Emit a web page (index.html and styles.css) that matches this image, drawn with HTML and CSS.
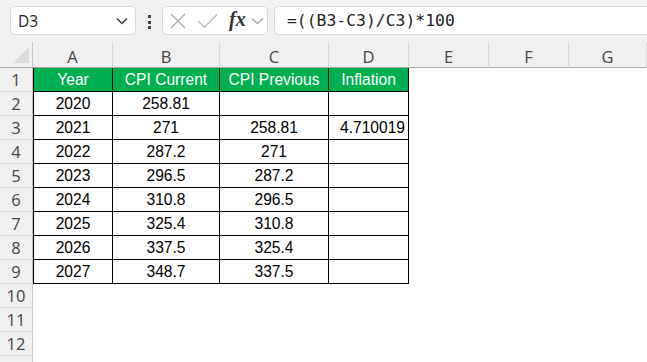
FILE: index.html
```html
<!DOCTYPE html>
<html lang="en">
<head>
    <meta charset="UTF-8">
    <title>Inflation</title>
    <link rel="stylesheet" href="styles.css">
</head>
<body>

<div class="toolbar">
    <div class="namebox">
        <span>D3</span>
        <svg class="chev" width="12" height="8" viewBox="0 0 12 8"><path d="M1 1.5 L6 6.5 L11 1.5" fill="none" stroke="#333" stroke-width="1.3"/></svg>
    </div>
    <div class="dots"><i></i><i></i><i></i></div>
    <div class="fnbox">
        <svg width="16" height="16" viewBox="0 0 16 16"><path d="M1 1 L15 15 M15 1 L1 15" stroke="#a8a8a8" stroke-width="1.2"/></svg>
        <svg width="21" height="16" viewBox="0 0 21 16"><path d="M1 8 L7.5 14.5 L20 1.5" fill="none" stroke="#b4b4b4" stroke-width="1.2"/></svg>
        <span class="fx">fx</span>
        <svg width="13" height="8" viewBox="0 0 13 8"><path d="M1 1.5 L6.5 6.5 L12 1.5" fill="none" stroke="#999" stroke-width="1.1"/></svg>
    </div>
    <div class="formula">=((B3-C3)/C3)*100</div>
</div>

<div class="sheet">
    <div class="corner"><div class="tri"></div></div>
    <div class="colhead">A</div>
    <div class="colhead">B</div>
    <div class="colhead">C</div>
    <div class="colhead">D</div>
    <div class="colhead">E</div>
    <div class="colhead">F</div>
    <div class="colhead">G</div>

    <div class="rowhead">1</div>
    <div class="cell t first head">Year</div>
    <div class="cell t head">CPI Current</div>
    <div class="cell t head">CPI Previous</div>
    <div class="cell t head">Inflation</div>
    <div class="cell"></div><div class="cell"></div><div class="cell"></div>

    <div class="rowhead">2</div>
    <div class="cell t first">2020</div>
    <div class="cell t">258.81</div>
    <div class="cell t"></div>
    <div class="cell t"></div>
    <div class="cell"></div><div class="cell"></div><div class="cell"></div>

    <div class="rowhead">3</div>
    <div class="cell t first">2021</div>
    <div class="cell t">271</div>
    <div class="cell t">258.81</div>
    <div class="cell t num">4.710019</div>
    <div class="cell"></div><div class="cell"></div><div class="cell"></div>

    <div class="rowhead">4</div>
    <div class="cell t first">2022</div>
    <div class="cell t">287.2</div>
    <div class="cell t">271</div>
    <div class="cell t"></div>
    <div class="cell"></div><div class="cell"></div><div class="cell"></div>

    <div class="rowhead">5</div>
    <div class="cell t first">2023</div>
    <div class="cell t">296.5</div>
    <div class="cell t">287.2</div>
    <div class="cell t"></div>
    <div class="cell"></div><div class="cell"></div><div class="cell"></div>

    <div class="rowhead">6</div>
    <div class="cell t first">2024</div>
    <div class="cell t">310.8</div>
    <div class="cell t">296.5</div>
    <div class="cell t"></div>
    <div class="cell"></div><div class="cell"></div><div class="cell"></div>

    <div class="rowhead">7</div>
    <div class="cell t first">2025</div>
    <div class="cell t">325.4</div>
    <div class="cell t">310.8</div>
    <div class="cell t"></div>
    <div class="cell"></div><div class="cell"></div><div class="cell"></div>

    <div class="rowhead">8</div>
    <div class="cell t first">2026</div>
    <div class="cell t">337.5</div>
    <div class="cell t">325.4</div>
    <div class="cell t"></div>
    <div class="cell"></div><div class="cell"></div><div class="cell"></div>

    <div class="rowhead">9</div>
    <div class="cell t first">2027</div>
    <div class="cell t">348.7</div>
    <div class="cell t">337.5</div>
    <div class="cell t"></div>
    <div class="cell"></div><div class="cell"></div><div class="cell"></div>

    <div class="rowhead">10</div>
    <div class="cell"></div><div class="cell"></div><div class="cell"></div><div class="cell"></div>
    <div class="cell"></div><div class="cell"></div><div class="cell"></div>

    <div class="rowhead">11</div>
    <div class="cell"></div><div class="cell"></div><div class="cell"></div><div class="cell"></div>
    <div class="cell"></div><div class="cell"></div><div class="cell"></div>

    <div class="rowhead">12</div>
    <div class="cell"></div><div class="cell"></div><div class="cell"></div><div class="cell"></div>
    <div class="cell"></div><div class="cell"></div><div class="cell"></div>

    <div class="rowhead"></div>
    <div class="cell"></div><div class="cell"></div><div class="cell"></div><div class="cell"></div>
    <div class="cell"></div><div class="cell"></div><div class="cell"></div>
</div>

</body>
</html>
```

FILE: styles.css
```css
body {
    margin: 0;
    background-color: #f0f0f0;
    font-family: "Liberation Sans", Arial, sans-serif;
    overflow: hidden;
    width: 647px;
    height: 362px;
}
.toolbar {
    display: flex;
    align-items: flex-start;
    height: 42px;
    padding-top: 6px;
    padding-left: 10px;
    box-sizing: border-box;
}
.namebox {
    display: flex;
    align-items: center;
    justify-content: space-between;
    width: 126px;
    height: 29px;
    box-sizing: border-box;
    background-color: white;
    border: 1px solid #d6d6d6;
    border-radius: 5px;
    padding: 0 7px 0 7px;
    font-family: "Open Sans", sans-serif;
    font-size: 15.5px;
    color: #222;
}
.dots {
    display: flex;
    flex-direction: column;
    gap: 2.5px;
    width: 26px;
    align-items: center;
    padding-top: 9px;
}
.dots i {
    display: block;
    width: 3px;
    height: 3px;
    background-color: #444;
}
.fnbox {
    display: flex;
    align-items: center;
    width: 106px;
    height: 29px;
    box-sizing: border-box;
    background-color: white;
    border: 1px solid #d6d6d6;
    border-radius: 5px;
    padding-left: 7px;
}
.fnbox svg:nth-child(1) {
    margin-right: 11px;
}
.fnbox svg:nth-child(2) {
    margin-right: 11px;
}
.fx {
    font-family: "Liberation Serif", serif;
    font-style: italic;
    font-weight: bold;
    font-size: 20px;
    color: #333;
    margin-right: 5px;
    margin-top: -3px;
}
.formula {
    flex: 1;
    height: 29px;
    box-sizing: border-box;
    margin-left: 6px;
    background-color: white;
    border: 1px solid #d6d6d6;
    border-right: none;
    border-radius: 5px 0 0 5px;
    padding-left: 12px;
    font-family: "DejaVu Sans Mono", monospace;
    font-size: 16.4px;
    line-height: 27px;
    color: #222;
    white-space: nowrap;
}
.sheet {
    display: grid;
    grid-template-columns: 33px 80px 107px 109px 80px 80px 80px 78px;
    grid-template-rows: 26px repeat(13, 24px);
    width: 647px;
    overflow: hidden;
    background-color: white;
}
.corner {
    background-color: #f0f0f0;
    border-right: 1px solid #c6c6c6;
    border-bottom: 1px solid #ababab;
    box-sizing: border-box;
    display: flex;
    align-items: flex-end;
    justify-content: flex-end;
    padding: 0 3px 4px 0;
}
.tri {
    width: 0;
    height: 0;
    border-left: 16px solid transparent;
    border-bottom: 16px solid #dcdcdc;
}
.colhead {
    background-color: #f0f0f0;
    border-right: 1px solid #d8d8d8;
    border-bottom: 1px solid #ababab;
    box-sizing: border-box;
    display: flex;
    align-items: center;
    justify-content: center;
    padding-top: 3px;
    font-family: "Open Sans", sans-serif;
    font-size: 16.5px;
    color: #444;
}
.rowhead {
    background-color: #f0f0f0;
    border-right: 1px solid #c6c6c6;
    border-bottom: 1px solid #dcdcdc;
    box-sizing: border-box;
    display: flex;
    align-items: center;
    justify-content: center;
    font-family: "Open Sans", sans-serif;
    font-size: 16.5px;
    color: #444;
}
.cell {
    box-sizing: border-box;
    display: flex;
    align-items: center;
    justify-content: center;
    font-size: 15.6px;
    color: black;
    white-space: nowrap;
}
.t {
    border-right: 1px solid black;
    border-bottom: 1px solid black;
}
.first {
    border-left: 1px solid black;
}
.head {
    background-color: #00b050;
    color: white;
}
.num {
    justify-content: flex-end;
    padding-right: 3px;
}
```
